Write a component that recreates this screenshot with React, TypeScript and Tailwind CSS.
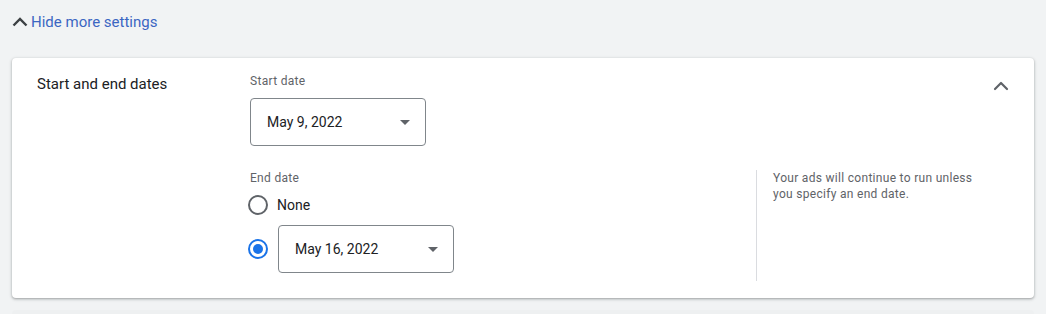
import { ChevronUp } from "lucide-react";

function DateSelect({ value }: { value: string }) {
  return (
    <div className="flex h-[48px] w-[176px] items-center justify-between rounded-[4px] border border-[#80868b] bg-white pl-4 pr-[15px]">
      <span className="text-[14px] text-[#202124]">{value}</span>
      <span className="h-0 w-0 border-x-[5px] border-t-[5px] border-x-transparent border-t-[#5f6368]" />
    </div>
  );
}

function Radio({ checked }: { checked?: boolean }) {
  return checked ? (
    <span className="flex h-5 w-5 shrink-0 items-center justify-center rounded-full border-2 border-[#1a73e8]">
      <span className="h-[10px] w-[10px] rounded-full bg-[#1a73e8]" />
    </span>
  ) : (
    <span className="block h-5 w-5 shrink-0 rounded-full border-2 border-[#5f6368]" />
  );
}

export default function App() {
  return (
    <div className="h-[314px] w-[1046px] overflow-hidden bg-[#f1f3f4] font-['Roboto',sans-serif]">
      <div className="flex h-[42px] items-center gap-[3px] pl-[12px] pt-[2px]">
        <svg width="16" height="10" viewBox="0 0 16 10" fill="none" className="text-[#3c4043]">
          <path d="M1.5 8.5 8 2l6.5 6.5" stroke="currentColor" strokeWidth="2.4" />
        </svg>
        <span className="text-[15px] text-[#3b66c2]">Hide more settings</span>
      </div>

      <div className="mx-[12px] mt-[16px] flex h-[240px] rounded-[4px] bg-white pt-[15px] shadow-[0_1px_2px_rgba(60,64,67,0.3),0_1px_3px_1px_rgba(60,64,67,0.15)]">
        <div className="w-[238px] pl-[25px] text-[15px] leading-[22px] text-[#202124]">Start and end dates</div>

        <div className="flex-1">
          <div className="text-[12px] leading-4 tracking-[0.3px] text-[#5f6368]">Start date</div>
          <div className="mt-[9px]">
            <DateSelect value="May 9, 2022" />
          </div>

          <div className="mt-[24px] flex">
            <div className="w-[506px] pb-[8px]">
              <div className="text-[12px] leading-4 tracking-[0.3px] text-[#5f6368]">End date</div>
              <div className="mt-[7px] flex h-6 items-center gap-[9px]">
                <div className="-ml-[2px]">
                  <Radio />
                </div>
                <span className="text-[14px] text-[#202124]">None</span>
              </div>
              <div className="mt-[8px] flex items-center gap-[10px]">
                <div className="-ml-[2px]">
                  <Radio checked />
                </div>
                <DateSelect value="May 16, 2022" />
              </div>
            </div>
            <div className="border-l border-[#dadce0] pl-4 text-[12px] leading-4 tracking-[0.3px] text-[#5f6368]">
              Your ads will continue to run unless
              <br />
              you specify an end date.
            </div>
          </div>
        </div>

        <div className="mt-[1px] pr-[21px]">
          <ChevronUp className="h-6 w-6 text-[#5f6368]" strokeWidth={2.2} />
        </div>
      </div>

      <div className="mx-[12px] mt-[12px] h-[10px] rounded-t-[4px] bg-[#eef0f1]" />
    </div>
  );
}
